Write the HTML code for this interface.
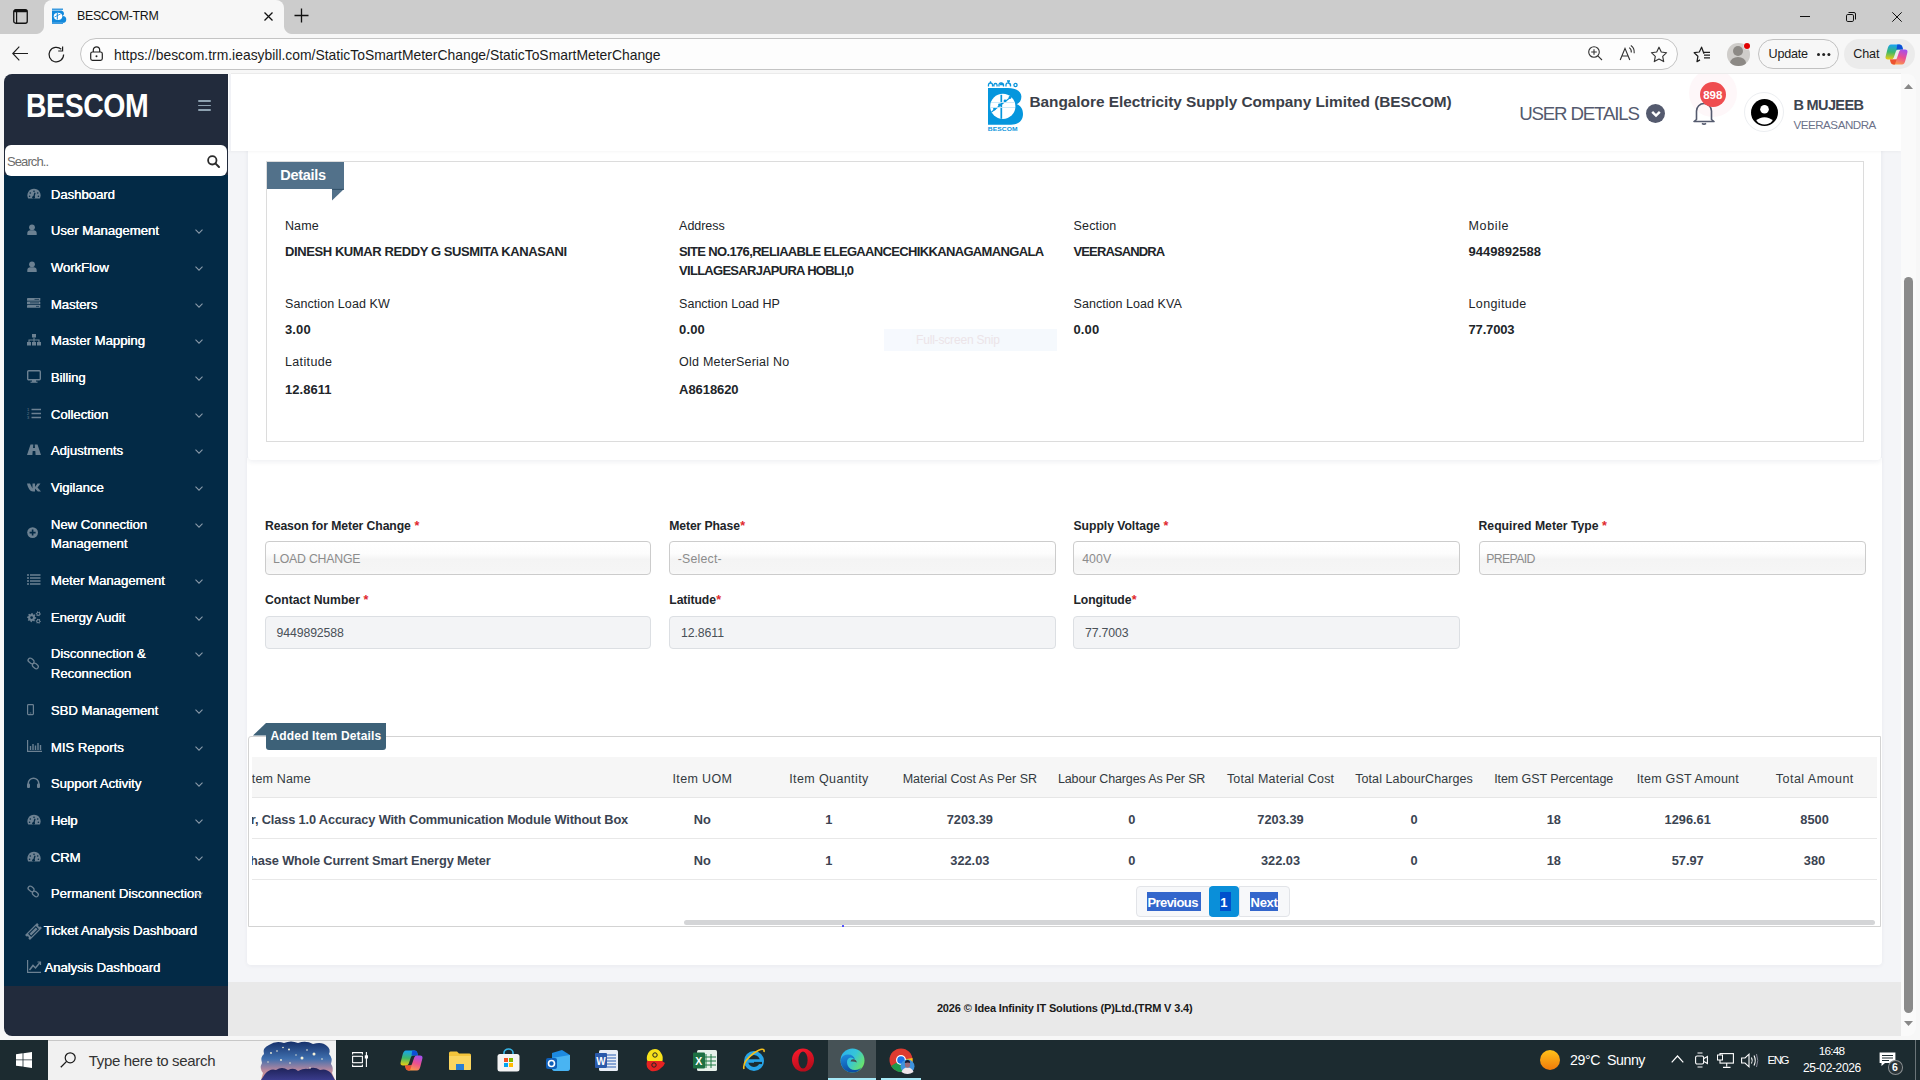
<!DOCTYPE html>
<html><head><meta charset="utf-8">
<style>
*{box-sizing:border-box;margin:0;padding:0}
html,body{width:1920px;height:1080px;overflow:hidden;background:#f7f7f7;font-family:"Liberation Sans",sans-serif;position:relative}
.a{position:absolute;white-space:nowrap}
svg{position:absolute;overflow:visible}
#tabs{left:0;top:0;width:1920px;height:34px;background:#cccccc}
#tab{left:44px;top:0;width:240px;height:34px;background:#f7f7f7;border-radius:8px 8px 0 0}
.flareL{left:36px;top:26px;width:8px;height:8px;background:radial-gradient(circle at 0 0,#cccccc 7.5px,#f7f7f7 8.5px)}
.flareR{left:284px;top:26px;width:8px;height:8px;background:radial-gradient(circle at 100% 0,#cccccc 7.5px,#f7f7f7 8.5px)}
#url{left:80px;top:38px;width:1598px;height:32px;background:#fdfdfd;border:1px solid #c4c4c4;border-radius:16px}
.ctext{font-size:13.9px;color:#1b1b1b;top:47px;line-height:16px}
#vp{left:4px;top:74px;width:1912px;height:962px;background:#f4f5f8;border-radius:8px;overflow:hidden}
</style></head><body>
<!-- browser chrome -->
<div class="a" id="tabs"></div>
<div class="a" id="tab"></div>
<div class="a flareL"></div>
<div class="a flareR"></div>
<svg style="left:13px;top:9px" width="15" height="15" viewBox="0 0 15 15"><rect x="0.75" y="0.75" width="13.5" height="13.5" rx="2" fill="none" stroke="#111" stroke-width="1.3"/><rect x="0.75" y="0.75" width="13.5" height="2.6" rx="1" fill="#111"/><line x1="3.6" y1="3" x2="3.6" y2="14" stroke="#111" stroke-width="1.2"/></svg>
<!-- favicon -->
<svg style="left:52px;top:8px" width="15" height="16" viewBox="0 0 15 16"><rect x="0" y="0.5" width="11" height="1.5" fill="#3c9be0"/><path d="M0 2.5H9.5A4 3.2 0 0 1 10.5 8A4 3.5 0 0 1 10 15H0Z" fill="#1289dc"/><ellipse cx="6" cy="8.3" rx="4.3" ry="3.6" fill="#fff"/><line x1="5.3" y1="5" x2="5.3" y2="11.5" stroke="#1289dc" stroke-width="1"/><line x1="2.5" y1="9" x2="8.5" y2="6" stroke="#1289dc" stroke-width=".8"/><rect x="0" y="14" width="11" height="2" fill="#3c9be0"/></svg>
<div class="a" style="left:77px;top:9px;font-size:12.4px;color:#141414;line-height:14px;letter-spacing:-0.32px">BESCOM-TRM</div>
<svg style="left:264px;top:12px" width="9" height="9" viewBox="0 0 9 9"><path d="M0.5 0.5L8.5 8.5M8.5 0.5L0.5 8.5" stroke="#111" stroke-width="1.25"/></svg>
<svg style="left:294px;top:8px" width="15" height="15" viewBox="0 0 15 15"><path d="M7.5 0.5V14.5M0.5 7.5H14.5" stroke="#111" stroke-width="1.3"/></svg>
<!-- window controls -->
<div class="a" style="left:1800px;top:16px;width:10px;height:1px;background:#111"></div>
<svg style="left:1846px;top:12px" width="10" height="10" viewBox="0 0 10 10"><rect x="0.5" y="2.5" width="7" height="7" rx="1.3" fill="none" stroke="#111" stroke-width="1"/><path d="M2.5 0.5H8A1.5 1.5 0 0 1 9.5 2V7.5" fill="none" stroke="#111" stroke-width="1"/></svg>
<svg style="left:1892px;top:12px" width="10" height="10" viewBox="0 0 10 10"><path d="M0.3 0.3L9.7 9.7M9.7 0.3L0.3 9.7" stroke="#111" stroke-width="1"/></svg>
<!-- toolbar -->
<svg style="left:12px;top:46px" width="17" height="16" viewBox="0 0 17 16"><path d="M16 7.5H1M7.3 0.7L0.8 7.5L7.3 14.3" fill="none" stroke="#1e1e1e" stroke-width="1.15"/></svg>
<svg style="left:47.5px;top:45.5px" width="17" height="17" viewBox="0 0 17 17"><path d="M13.3 3.3A7.3 7.3 0 1 0 15.6 8.5" fill="none" stroke="#1e1e1e" stroke-width="1.2"/><path d="M14.6 0.6V5H10.2" fill="none" stroke="#1e1e1e" stroke-width="1.2"/></svg>
<div class="a" id="url"></div>
<svg style="left:90px;top:46px" width="13" height="15" viewBox="0 0 13 15"><rect x="0.7" y="6" width="11.6" height="8.3" rx="1.8" fill="none" stroke="#222" stroke-width="1.2"/><path d="M3.3 6V4A3.2 3.2 0 0 1 9.7 4V6" fill="none" stroke="#222" stroke-width="1.2"/><circle cx="6.5" cy="10.2" r="1" fill="#222"/></svg>
<div class="a ctext" style="left:114px">https://bescom.trm.ieasybill.com/StaticToSmartMeterChange/StaticToSmartMeterChange</div>
<svg style="left:1588px;top:46px" width="15" height="15" viewBox="0 0 15 15"><circle cx="6" cy="6" r="5.3" fill="none" stroke="#333" stroke-width="1.1"/><path d="M6 3.2V8.8M3.2 6H8.8M9.8 9.8L14 14" stroke="#333" stroke-width="1.1"/></svg>
<svg style="left:1619px;top:45px" width="18" height="16" viewBox="0 0 18 16"><path d="M1.2 15L6 3.4L10.8 15M2.9 11H9.1" fill="none" stroke="#333" stroke-width="1.15"/><path d="M10.2 2.6Q12.6 4.2 12.3 7.5M11.8 0.6Q15.6 2.8 15.2 8.2" fill="none" stroke="#333" stroke-width="1.1"/></svg>
<svg style="left:1650px;top:45.5px" width="18" height="17" viewBox="0 0 18 17"><path d="M9 1.2L11.3 6L16.6 6.7L12.7 10.3L13.7 15.6L9 13L4.3 15.6L5.3 10.3L1.4 6.7L6.7 6Z" fill="none" stroke="#333" stroke-width="1.15" stroke-linejoin="round"/></svg>
<svg style="left:1693px;top:45.5px" width="18" height="17" viewBox="0 0 18 17"><path d="M11 7.8L8.6 1.2L6.3 6L1.2 6.7L4.9 10.3L4 15.6L7 13.9" fill="none" stroke="#1e1e1e" stroke-width="1.25" stroke-linejoin="round"/><path d="M11 6.3H17M11 9.1H17M11 11.9H17" stroke="#1e1e1e" stroke-width="1.3"/></svg>
<div class="a" style="left:1727px;top:43px;width:22.5px;height:22.5px;border-radius:50%;background:#cfcdca;overflow:hidden"><div class="a" style="left:6px;top:3.3px;width:10px;height:10px;border-radius:50%;background:#8c8985"></div><div class="a" style="left:3.3px;top:14.3px;width:16px;height:12px;border-radius:50%;background:#8c8985"></div></div>
<div class="a" style="left:1744px;top:43px;width:6px;height:6px;border-radius:50%;background:#e00000;box-shadow:0 0 0 0.5px #f7f7f7"></div>
<div class="a" style="left:1758px;top:39px;width:81px;height:30px;border:1px solid #c1c1c1;border-radius:15px"></div>
<div class="a" style="left:1768.6px;top:45.8px;font-size:12.6px;color:#1b1b1b;line-height:16px;letter-spacing:-0.25px">Update</div>
<div class="a" style="left:1817px;top:52.8px;width:3px;height:3px;border-radius:50%;background:#222;box-shadow:5.2px 0 0 #222,10.4px 0 0 #222"></div>
<div class="a" style="left:1844px;top:39px;width:71px;height:30px;background:#ebebeb;border-radius:15px"></div>
<div class="a" style="left:1853.2px;top:45.6px;font-size:12.6px;color:#1b1b1b;line-height:16px;letter-spacing:-0.1px">Chat</div>
<svg style="left:1884.5px;top:43.5px" width="23" height="21" viewBox="0 0 23 21"><defs><linearGradient id="cg1" x1="0.3" y1="0" x2="0.2" y2="1"><stop offset="0" stop-color="#17a2f2"/><stop offset=".5" stop-color="#3db86a"/><stop offset="1" stop-color="#f0cc10"/></linearGradient><linearGradient id="cg2" x1="0.8" y1="0" x2="0.4" y2="1"><stop offset="0" stop-color="#a24ff0"/><stop offset=".5" stop-color="#ec4f90"/><stop offset="1" stop-color="#fb9a48"/></linearGradient></defs><path d="M6 0.5H14.5Q16.5 0.5 17.2 2.5L18 5.5H13Q11.5 5.5 11 7L8.8 13.5Q8 15.5 6 15.5H3Q0 15.5 0.6 12.5L2.5 5Q3.5 0.5 6 0.5Z" fill="url(#cg1)"/><path d="M12.3 0.5H14.5Q16.5 0.5 17.2 2.5L18 5.5H11.5Z" fill="#0d4fd8"/><path d="M17 20.5H8.5Q6.5 20.5 5.8 18.5L5 15.5H10Q11.5 15.5 12 14L14.2 7.5Q15 5.5 17 5.5H20Q23 5.5 22.4 8.5L20.5 16Q19.5 20.5 17 20.5Z" fill="url(#cg2)"/><path d="M5 15.5H11.5L10 20.5H8.5Q6.5 20.5 5.8 18.5Z" fill="#ec5230"/></svg>

<div class="a" id="vp"></div>
<div class="a" style="left:4px;top:74px;width:224px;height:962px;background:#222b3c;border-radius:8px 0 0 8px;"></div>
<div class="a" style="left:4px;top:175px;width:224px;height:811px;background:#032a46;"></div>
<div class="a " style="left:25.60px;top:85.13px;font-size:32.8px;line-height:41px;color:#ffffff;font-weight:bold;letter-spacing:-0.500px;transform:scaleX(0.868);transform-origin:0 0;">BESCOM</div>
<div class="a" style="left:198px;top:100px;width:12.5px;height:1.8px;background:#8ea2b1;border-radius:1px;"></div>
<div class="a" style="left:198px;top:104.5px;width:12.5px;height:1.8px;background:#8ea2b1;border-radius:1px;"></div>
<div class="a" style="left:198px;top:109px;width:12.5px;height:1.8px;background:#8ea2b1;border-radius:1px;"></div>
<div class="a" style="left:5px;top:145px;width:221.5px;height:30.5px;background:#ffffff;border-radius:6px;"></div>
<div class="a " style="left:7.00px;top:153.50px;font-size:13px;line-height:16px;color:#6c6c6c;letter-spacing:-0.916px;">Search..</div>
<svg style="left:207px;top:154.5px" width="13" height="13" viewBox="0 0 13 13"><circle cx="5.3" cy="5.3" r="4.2" fill="none" stroke="#2b2b2b" stroke-width="1.8"/><path d="M8.4 8.4L12 12" stroke="#2b2b2b" stroke-width="2" stroke-linecap="round"/></svg>
<div class="a " style="left:50.70px;top:187.03px;font-size:13.2px;line-height:16px;color:#ffffff;letter-spacing:-0.044px;text-shadow:0.35px 0 0 #fff;">Dashboard</div>
<svg style="left:27px;top:187.5px" width="15" height="13" viewBox="0 0 15 13"><path d="M1.2 10.5A6.6 6.6 0 1 1 12.8 10.5Z" fill="#6c8192"/><circle cx="7" cy="3.3" r="0.8" fill="#032a46"/><circle cx="3.3" cy="5" r="0.8" fill="#032a46"/><circle cx="10.7" cy="5" r="0.8" fill="#032a46"/><circle cx="2.6" cy="8.3" r="0.8" fill="#032a46"/><circle cx="11.4" cy="8.3" r="0.8" fill="#032a46"/><path d="M6.5 10L8 4.8" stroke="#032a46" stroke-width="1.3"/><circle cx="6.6" cy="9.3" r="1.4" fill="#032a46"/></svg>
<div class="a " style="left:50.70px;top:222.73px;font-size:13.2px;line-height:16px;color:#ffffff;letter-spacing:-0.025px;text-shadow:0.35px 0 0 #fff;">User Management</div>
<svg style="left:27px;top:223.7px" width="15" height="13" viewBox="0 0 15 13"><circle cx="5" cy="3.3" r="2.9" fill="#6c8192"/><path d="M0.3 11V9A3 3 0 0 1 3.3 6.3H6.7A3 3 0 0 1 9.7 9V11Z" fill="#6c8192"/></svg>
<svg style="left:195px;top:228.7px" width="8" height="5" viewBox="0 0 8 5"><path d="M0.5 0.6L4 4.1L7.5 0.6" fill="none" stroke="#8a9aa9" stroke-width="1.1"/></svg>
<div class="a " style="left:50.70px;top:259.73px;font-size:13.2px;line-height:16px;color:#ffffff;letter-spacing:-0.050px;text-shadow:0.35px 0 0 #fff;">WorkFlow</div>
<svg style="left:27px;top:260.7px" width="15" height="13" viewBox="0 0 15 13"><circle cx="5" cy="3.3" r="2.9" fill="#6c8192"/><path d="M0.3 11V9A3 3 0 0 1 3.3 6.3H6.7A3 3 0 0 1 9.7 9V11Z" fill="#6c8192"/></svg>
<svg style="left:195px;top:265.7px" width="8" height="5" viewBox="0 0 8 5"><path d="M0.5 0.6L4 4.1L7.5 0.6" fill="none" stroke="#8a9aa9" stroke-width="1.1"/></svg>
<div class="a " style="left:50.70px;top:297.23px;font-size:13.2px;line-height:16px;color:#ffffff;letter-spacing:-0.058px;text-shadow:0.35px 0 0 #fff;">Masters</div>
<svg style="left:27px;top:298.1px" width="15" height="13" viewBox="0 0 15 13"><rect x="0" y="0" width="13.3" height="2.8" rx="0.4" fill="#6c8192"/><rect x="0" y="3.5" width="13.3" height="2.8" rx="0.4" fill="#6c8192"/><rect x="0" y="7" width="13.3" height="2.8" rx="0.4" fill="#6c8192"/><path d="M7.5 1.4H12M3 4.9H12M9 8.4H12" stroke="#032a46" stroke-width="0.7"/></svg>
<svg style="left:195px;top:303.2px" width="8" height="5" viewBox="0 0 8 5"><path d="M0.5 0.6L4 4.1L7.5 0.6" fill="none" stroke="#8a9aa9" stroke-width="1.1"/></svg>
<div class="a " style="left:50.70px;top:333.03px;font-size:13.2px;line-height:16px;color:#ffffff;letter-spacing:-0.027px;text-shadow:0.35px 0 0 #fff;">Master Mapping</div>
<svg style="left:27px;top:333.5px" width="15" height="13" viewBox="0 0 15 13"><rect x="5" y="0" width="4" height="3.5" fill="#6c8192"/><path d="M7 3.5V6M2 8V6H12V8M7 6V8" stroke="#6c8192" stroke-width="1.1" fill="none"/><rect x="0" y="8" width="4" height="3.5" fill="#6c8192"/><rect x="5" y="8" width="4" height="3.5" fill="#6c8192"/><rect x="10" y="8" width="4" height="3.5" fill="#6c8192"/></svg>
<svg style="left:195px;top:339.0px" width="8" height="5" viewBox="0 0 8 5"><path d="M0.5 0.6L4 4.1L7.5 0.6" fill="none" stroke="#8a9aa9" stroke-width="1.1"/></svg>
<div class="a " style="left:50.70px;top:370.03px;font-size:13.2px;line-height:16px;color:#ffffff;letter-spacing:-0.058px;text-shadow:0.35px 0 0 #fff;">Billing</div>
<svg style="left:27px;top:370.2px" width="15" height="13" viewBox="0 0 15 13"><rect x="0.7" y="0.7" width="12.6" height="9" rx="1" fill="none" stroke="#6c8192" stroke-width="1.4"/><rect x="5" y="10" width="4" height="2" fill="#6c8192"/><rect x="3.5" y="11.6" width="7" height="1.2" fill="#6c8192"/></svg>
<svg style="left:195px;top:376.0px" width="8" height="5" viewBox="0 0 8 5"><path d="M0.5 0.6L4 4.1L7.5 0.6" fill="none" stroke="#8a9aa9" stroke-width="1.1"/></svg>
<div class="a " style="left:50.70px;top:406.73px;font-size:13.2px;line-height:16px;color:#ffffff;letter-spacing:-0.039px;text-shadow:0.35px 0 0 #fff;">Collection</div>
<svg style="left:27px;top:407px" width="15" height="13" viewBox="0 0 15 13"><path d="M4.5 2.5H14M4.5 6.5H14M4.5 10.5H14" stroke="#6c8192" stroke-width="1.6"/><text x="0" y="4" font-size="4" fill="#6c8192" font-family="Liberation Sans">1</text><text x="0" y="8" font-size="4" fill="#6c8192" font-family="Liberation Sans">2</text><text x="0" y="12" font-size="4" fill="#6c8192" font-family="Liberation Sans">3</text></svg>
<svg style="left:195px;top:412.7px" width="8" height="5" viewBox="0 0 8 5"><path d="M0.5 0.6L4 4.1L7.5 0.6" fill="none" stroke="#8a9aa9" stroke-width="1.1"/></svg>
<div class="a " style="left:50.70px;top:443.03px;font-size:13.2px;line-height:16px;color:#ffffff;letter-spacing:-0.035px;text-shadow:0.35px 0 0 #fff;">Adjustments</div>
<svg style="left:27px;top:444px" width="15" height="13" viewBox="0 0 15 13"><path d="M0 11L3.5 0.5H6.3L6 4H8L7.7 0.5H10.5L14 11H8.6L8.3 7H5.7L5.4 11Z" fill="#6c8192"/></svg>
<svg style="left:195px;top:449.0px" width="8" height="5" viewBox="0 0 8 5"><path d="M0.5 0.6L4 4.1L7.5 0.6" fill="none" stroke="#8a9aa9" stroke-width="1.1"/></svg>
<div class="a " style="left:50.70px;top:479.93px;font-size:13.2px;line-height:16px;color:#ffffff;letter-spacing:-0.044px;text-shadow:0.35px 0 0 #fff;">Vigilance</div>
<svg style="left:27px;top:481.5px" width="15" height="13" viewBox="0 0 15 13"><path d="M0 1.5H3L5.5 6.5V1.5H8V5L10.5 1.5H13.5L10.5 5.5L14 9.5H10.8L8 6.5V9.5H6C3 9.5 1 6 0 1.5Z" fill="#6c8192"/></svg>
<svg style="left:195px;top:485.9px" width="8" height="5" viewBox="0 0 8 5"><path d="M0.5 0.6L4 4.1L7.5 0.6" fill="none" stroke="#8a9aa9" stroke-width="1.1"/></svg>
<div class="a " style="left:50.70px;top:517.03px;font-size:13.2px;line-height:16px;color:#ffffff;letter-spacing:-0.027px;text-shadow:0.35px 0 0 #fff;">New Connection</div>
<div class="a " style="left:50.70px;top:535.83px;font-size:13.2px;line-height:16px;color:#ffffff;letter-spacing:-0.039px;text-shadow:0.35px 0 0 #fff;">Management</div>
<svg style="left:27px;top:527.4px" width="15" height="13" viewBox="0 0 15 13"><circle cx="5.6" cy="5.6" r="5.4" fill="#6c8192"/><path d="M5.6 2.6V8.6M2.6 5.6H8.6" stroke="#032a46" stroke-width="1.6"/></svg>
<svg style="left:195px;top:523.0px" width="8" height="5" viewBox="0 0 8 5"><path d="M0.5 0.6L4 4.1L7.5 0.6" fill="none" stroke="#8a9aa9" stroke-width="1.1"/></svg>
<div class="a " style="left:50.70px;top:573.03px;font-size:13.2px;line-height:16px;color:#ffffff;letter-spacing:-0.023px;text-shadow:0.35px 0 0 #fff;">Meter Management</div>
<svg style="left:27px;top:574px" width="15" height="13" viewBox="0 0 15 13"><path d="M0 1H2M0 4H2M0 7H2M0 10H2M3 1H13.5M3 4H13.5M3 7H13.5M3 10H13.5" stroke="#6c8192" stroke-width="1.5"/></svg>
<svg style="left:195px;top:579.0px" width="8" height="5" viewBox="0 0 8 5"><path d="M0.5 0.6L4 4.1L7.5 0.6" fill="none" stroke="#8a9aa9" stroke-width="1.1"/></svg>
<div class="a " style="left:50.70px;top:609.73px;font-size:13.2px;line-height:16px;color:#ffffff;letter-spacing:-0.032px;text-shadow:0.35px 0 0 #fff;">Energy Audit</div>
<svg style="left:27px;top:610.5px" width="15" height="13" viewBox="0 0 15 13"><path fill-rule="evenodd" d="M9.20 6.60L9.11 7.50L7.83 7.94L7.51 8.54L7.85 9.85L7.16 10.42L5.94 9.83L5.28 10.03L4.60 11.20L3.70 11.11L3.26 9.83L2.66 9.51L1.35 9.85L0.78 9.16L1.37 7.94L1.17 7.28L0.00 6.60L0.09 5.70L1.37 5.26L1.69 4.66L1.35 3.35L2.04 2.78L3.26 3.37L3.92 3.17L4.60 2.00L5.50 2.09L5.94 3.37L6.54 3.69L7.85 3.35L8.42 4.04L7.83 5.26L8.03 5.92ZM6.00 6.60A1.4 1.4 0 1 0 3.20 6.60A1.4 1.4 0 1 0 6.00 6.60ZM13.90 2.80L13.81 3.47L12.95 3.75L12.64 4.14L12.60 5.05L11.97 5.31L11.30 4.70L10.81 4.64L10.00 5.05L9.46 4.64L9.65 3.75L9.46 3.29L8.70 2.80L8.79 2.13L9.65 1.85L9.96 1.46L10.00 0.55L10.63 0.29L11.30 0.90L11.79 0.96L12.60 0.55L13.14 0.96L12.95 1.85L13.14 2.31ZM12.30 2.80A1.0 1.0 0 1 0 10.30 2.80A1.0 1.0 0 1 0 12.30 2.80ZM13.90 10.20L13.81 10.87L12.95 11.15L12.64 11.54L12.60 12.45L11.97 12.71L11.30 12.10L10.81 12.04L10.00 12.45L9.46 12.04L9.65 11.15L9.46 10.69L8.70 10.20L8.79 9.53L9.65 9.25L9.96 8.86L10.00 7.95L10.63 7.69L11.30 8.30L11.79 8.36L12.60 7.95L13.14 8.36L12.95 9.25L13.14 9.71ZM12.30 10.20A1.0 1.0 0 1 0 10.30 10.20A1.0 1.0 0 1 0 12.30 10.20Z" fill="#6c8192"/></svg>
<svg style="left:195px;top:615.7px" width="8" height="5" viewBox="0 0 8 5"><path d="M0.5 0.6L4 4.1L7.5 0.6" fill="none" stroke="#8a9aa9" stroke-width="1.1"/></svg>
<div class="a " style="left:50.70px;top:645.83px;font-size:13.2px;line-height:16px;color:#ffffff;letter-spacing:-0.025px;text-shadow:0.35px 0 0 #fff;">Disconnection &amp;</div>
<div class="a " style="left:50.70px;top:665.73px;font-size:13.2px;line-height:16px;color:#ffffff;letter-spacing:-0.032px;text-shadow:0.35px 0 0 #fff;">Reconnection</div>
<svg style="left:27px;top:658px" width="15" height="13" viewBox="0 0 15 13"><rect x="0.8" y="0.8" width="6.5" height="4.2" rx="2.1" transform="rotate(40 4 3)" fill="none" stroke="#6c8192" stroke-width="1.3"/><rect x="5" y="5.8" width="6.5" height="4.2" rx="2.1" transform="rotate(40 8.2 8)" fill="none" stroke="#6c8192" stroke-width="1.3"/></svg>
<svg style="left:195px;top:651.8px" width="8" height="5" viewBox="0 0 8 5"><path d="M0.5 0.6L4 4.1L7.5 0.6" fill="none" stroke="#8a9aa9" stroke-width="1.1"/></svg>
<div class="a " style="left:50.70px;top:702.93px;font-size:13.2px;line-height:16px;color:#ffffff;letter-spacing:-0.027px;text-shadow:0.35px 0 0 #fff;">SBD Management</div>
<svg style="left:27px;top:704px" width="15" height="13" viewBox="0 0 15 13"><rect x="0.6" y="0.6" width="5.8" height="10" rx="0.8" fill="none" stroke="#6c8192" stroke-width="1.2"/><path d="M2.7 9H4.3" stroke="#6c8192" stroke-width="0.8"/></svg>
<svg style="left:195px;top:708.9px" width="8" height="5" viewBox="0 0 8 5"><path d="M0.5 0.6L4 4.1L7.5 0.6" fill="none" stroke="#8a9aa9" stroke-width="1.1"/></svg>
<div class="a " style="left:50.70px;top:739.93px;font-size:13.2px;line-height:16px;color:#ffffff;letter-spacing:-0.035px;text-shadow:0.35px 0 0 #fff;">MIS Reports</div>
<svg style="left:27px;top:740px" width="15" height="13" viewBox="0 0 15 13"><path d="M0.6 0V11.4H15" stroke="#6c8192" stroke-width="1.2" fill="none"/><path d="M3.5 10V6M6 10V4M8.5 10V5.5M11 10V3M13.5 10V5" stroke="#6c8192" stroke-width="1.4"/></svg>
<svg style="left:195px;top:745.9px" width="8" height="5" viewBox="0 0 8 5"><path d="M0.5 0.6L4 4.1L7.5 0.6" fill="none" stroke="#8a9aa9" stroke-width="1.1"/></svg>
<div class="a " style="left:50.70px;top:775.93px;font-size:13.2px;line-height:16px;color:#ffffff;letter-spacing:-0.023px;text-shadow:0.35px 0 0 #fff;">Support Activity</div>
<svg style="left:27px;top:776.5px" width="15" height="13" viewBox="0 0 15 13"><path d="M1.2 8V6.5A5.3 5.3 0 0 1 11.8 6.5V8" fill="none" stroke="#6c8192" stroke-width="1.5"/><rect x="0" y="6.5" width="3" height="4.5" rx="1" fill="#6c8192"/><rect x="10" y="6.5" width="3" height="4.5" rx="1" fill="#6c8192"/></svg>
<svg style="left:195px;top:781.9px" width="8" height="5" viewBox="0 0 8 5"><path d="M0.5 0.6L4 4.1L7.5 0.6" fill="none" stroke="#8a9aa9" stroke-width="1.1"/></svg>
<div class="a " style="left:50.70px;top:812.93px;font-size:13.2px;line-height:16px;color:#ffffff;letter-spacing:-0.117px;text-shadow:0.35px 0 0 #fff;">Help</div>
<svg style="left:27px;top:814px" width="15" height="13" viewBox="0 0 15 13"><path d="M1.2 10.5A6.6 6.6 0 1 1 12.8 10.5Z" fill="#6c8192"/><circle cx="7" cy="3.3" r="0.8" fill="#032a46"/><circle cx="3.3" cy="5" r="0.8" fill="#032a46"/><circle cx="10.7" cy="5" r="0.8" fill="#032a46"/><circle cx="2.6" cy="8.3" r="0.8" fill="#032a46"/><circle cx="11.4" cy="8.3" r="0.8" fill="#032a46"/><path d="M6.5 10L8 4.8" stroke="#032a46" stroke-width="1.3"/><circle cx="6.6" cy="9.3" r="1.4" fill="#032a46"/></svg>
<svg style="left:195px;top:818.9px" width="8" height="5" viewBox="0 0 8 5"><path d="M0.5 0.6L4 4.1L7.5 0.6" fill="none" stroke="#8a9aa9" stroke-width="1.1"/></svg>
<div class="a " style="left:50.70px;top:850.23px;font-size:13.2px;line-height:16px;color:#ffffff;letter-spacing:-0.175px;text-shadow:0.35px 0 0 #fff;">CRM</div>
<svg style="left:27px;top:851px" width="15" height="13" viewBox="0 0 15 13"><path d="M1.2 10.5A6.6 6.6 0 1 1 12.8 10.5Z" fill="#6c8192"/><circle cx="7" cy="3.3" r="0.8" fill="#032a46"/><circle cx="3.3" cy="5" r="0.8" fill="#032a46"/><circle cx="10.7" cy="5" r="0.8" fill="#032a46"/><circle cx="2.6" cy="8.3" r="0.8" fill="#032a46"/><circle cx="11.4" cy="8.3" r="0.8" fill="#032a46"/><path d="M6.5 10L8 4.8" stroke="#032a46" stroke-width="1.3"/><circle cx="6.6" cy="9.3" r="1.4" fill="#032a46"/></svg>
<svg style="left:195px;top:856.2px" width="8" height="5" viewBox="0 0 8 5"><path d="M0.5 0.6L4 4.1L7.5 0.6" fill="none" stroke="#8a9aa9" stroke-width="1.1"/></svg>
<div class="a " style="left:50.70px;top:886.33px;font-size:13.2px;line-height:16px;color:#ffffff;letter-spacing:-0.016px;text-shadow:0.35px 0 0 #fff;">Permanent Disconnection</div>
<svg style="left:27px;top:886px" width="15" height="13" viewBox="0 0 15 13"><rect x="0.8" y="0.8" width="6.5" height="4.2" rx="2.1" transform="rotate(40 4 3)" fill="none" stroke="#6c8192" stroke-width="1.3"/><rect x="5" y="5.8" width="6.5" height="4.2" rx="2.1" transform="rotate(40 8.2 8)" fill="none" stroke="#6c8192" stroke-width="1.3"/></svg>
<svg style="left:195px;top:892.3px" width="8" height="5" viewBox="0 0 8 5"><path d="M0.5 0.6L4 4.1L7.5 0.6" fill="none" stroke="#8a9aa9" stroke-width="1.1"/></svg>
<svg style="left:25.5px;top:924px" width="15" height="15" viewBox="0 0 15 15"><g transform="rotate(-45 7.5 7.5)"><path d="M-1 4H16V6.2A1.3 1.3 0 0 0 16 8.8V11H-1V8.8A1.3 1.3 0 0 0 -1 6.2Z" fill="#6c8192"/><rect x="2.5" y="5.8" width="10" height="3.4" fill="none" stroke="#032a46" stroke-width="1"/></g></svg>
<div class="a " style="left:43.60px;top:922.73px;font-size:13.2px;line-height:16px;color:#ffffff;letter-spacing:-0.061px;text-shadow:0.35px 0 0 #fff;">Ticket Analysis Dashboard</div>
<svg style="left:27px;top:960px" width="15" height="13" viewBox="0 0 15 13"><path d="M0.6 0V12.4H14" stroke="#6c8192" stroke-width="1.2" fill="none"/><path d="M2.5 10L6 5.5L8.5 8L13 2.5" stroke="#6c8192" stroke-width="1.5" fill="none"/><path d="M10.5 2H13.5V5" stroke="#6c8192" stroke-width="1.2" fill="none"/></svg>
<div class="a " style="left:44.40px;top:959.63px;font-size:13.2px;line-height:16px;color:#ffffff;letter-spacing:-0.082px;text-shadow:0.35px 0 0 #fff;">Analysis Dashboard</div>

<div class="a" style="left:247px;top:458px;width:1635px;height:507px;background:#ffffff;border-radius:0 0 4px 4px;box-shadow:0 1px 4px rgba(30,40,80,0.05);"></div>
<div class="a" style="left:248px;top:140px;width:1633px;height:320px;background:#ffffff;border-radius:4px;box-shadow:0 2px 5px rgba(30,40,80,0.07);"></div>
<div class="a" style="left:266px;top:161px;width:1598px;height:281px;border:1px solid #dcdcdc;"></div>
<div class="a" style="left:267px;top:162px;width:77px;height:26.6px;background:#52718a;"></div>
<svg style="left:332px;top:188.5px" width="12" height="11.5" viewBox="0 0 12 11.5"><path d="M0 0H12L0 11.5Z" fill="#52718a"/><path d="M0 0.4H12" stroke="#2e4d63" stroke-width="0.9"/></svg>
<div class="a " style="left:280.30px;top:165.88px;font-size:14.5px;line-height:18px;color:#ffffff;font-weight:bold;letter-spacing:-0.308px;">Details</div>
<div class="a " style="left:285.00px;top:217.77px;font-size:12.5px;line-height:16px;color:#212529;letter-spacing:0.085px;">Name</div>
<div class="a " style="left:285.00px;top:243.80px;font-size:13px;line-height:16px;color:#212529;font-weight:bold;letter-spacing:-0.406px;">DINESH KUMAR REDDY G SUSMITA KANASANI</div>
<div class="a " style="left:679.10px;top:217.77px;font-size:12.5px;line-height:16px;color:#212529;letter-spacing:-0.043px;">Address</div>
<div class="a " style="left:679.10px;top:243.80px;font-size:13px;line-height:16px;color:#212529;font-weight:bold;letter-spacing:-0.656px;">SITE NO.176,RELIAABLE ELEGAANCECHIKKANAGAMANGALA</div>
<div class="a " style="left:1073.50px;top:217.77px;font-size:12.5px;line-height:16px;color:#212529;letter-spacing:0.168px;">Section</div>
<div class="a " style="left:1073.50px;top:243.80px;font-size:13px;line-height:16px;color:#212529;font-weight:bold;letter-spacing:-0.870px;">VEERASANDRA</div>
<div class="a " style="left:1468.50px;top:217.77px;font-size:12.5px;line-height:16px;color:#212529;letter-spacing:0.635px;">Mobile</div>
<div class="a " style="left:1468.50px;top:243.80px;font-size:13px;line-height:16px;color:#212529;font-weight:bold;letter-spacing:0.033px;">9449892588</div>
<div class="a " style="left:285.00px;top:295.57px;font-size:12.5px;line-height:16px;color:#212529;letter-spacing:0.078px;">Sanction Load KW</div>
<div class="a " style="left:285.00px;top:321.80px;font-size:13px;line-height:16px;color:#212529;font-weight:bold;letter-spacing:0.133px;">3.00</div>
<div class="a " style="left:679.10px;top:295.57px;font-size:12.5px;line-height:16px;color:#212529;">Sanction Load HP</div>
<div class="a " style="left:679.10px;top:321.80px;font-size:13px;line-height:16px;color:#212529;font-weight:bold;letter-spacing:0.133px;">0.00</div>
<div class="a " style="left:1073.50px;top:295.57px;font-size:12.5px;line-height:16px;color:#212529;letter-spacing:0.051px;">Sanction Load KVA</div>
<div class="a " style="left:1073.50px;top:321.80px;font-size:13px;line-height:16px;color:#212529;font-weight:bold;letter-spacing:0.133px;">0.00</div>
<div class="a " style="left:1468.50px;top:295.57px;font-size:12.5px;line-height:16px;color:#212529;letter-spacing:0.361px;">Longitude</div>
<div class="a " style="left:1468.50px;top:321.80px;font-size:13px;line-height:16px;color:#212529;font-weight:bold;letter-spacing:-0.165px;">77.7003</div>
<div class="a " style="left:285.00px;top:354.47px;font-size:12.5px;line-height:16px;color:#212529;letter-spacing:0.360px;">Latitude</div>
<div class="a " style="left:285.00px;top:381.60px;font-size:13px;line-height:16px;color:#212529;font-weight:bold;letter-spacing:0.021px;">12.8611</div>
<div class="a " style="left:679.10px;top:354.47px;font-size:12.5px;line-height:16px;color:#212529;letter-spacing:0.218px;">Old MeterSerial No</div>
<div class="a " style="left:679.10px;top:381.60px;font-size:13px;line-height:16px;color:#212529;font-weight:bold;letter-spacing:-0.071px;">A8618620</div>
<div class="a " style="left:679.10px;top:262.50px;font-size:13px;line-height:16px;color:#212529;font-weight:bold;letter-spacing:-0.724px;">VILLAGESARJAPURA HOBLI,0</div>
<div class="a" style="left:884px;top:329.2px;width:173px;height:21.5px;background:#f5f9fd;"></div>
<div class="a" style="left:884px;top:329.2px;width:28px;height:21.5px;background:#f6f9fe;"></div>
<div class="a " style="left:916.00px;top:332.64px;font-size:12px;line-height:15px;color:#ece4e8;letter-spacing:-0.180px;">Full-screen Snip</div>
<div class="a " style="left:265.00px;top:518.67px;font-size:12.2px;line-height:15px;color:#212529;font-weight:bold;letter-spacing:-0.081px;">Reason for Meter Change</div>
<div class="a " style="left:414.50px;top:518.07px;font-size:12.5px;line-height:16px;color:#e0282e;font-weight:bold;">*</div>
<div class="a " style="left:669.30px;top:518.67px;font-size:12.2px;line-height:15px;color:#212529;font-weight:bold;letter-spacing:-0.118px;">Meter Phase</div>
<div class="a " style="left:740.30px;top:518.07px;font-size:12.5px;line-height:16px;color:#e0282e;font-weight:bold;">*</div>
<div class="a " style="left:1073.50px;top:518.67px;font-size:12.2px;line-height:15px;color:#212529;font-weight:bold;letter-spacing:-0.040px;">Supply Voltage</div>
<div class="a " style="left:1163.50px;top:518.07px;font-size:12.5px;line-height:16px;color:#e0282e;font-weight:bold;">*</div>
<div class="a " style="left:1478.50px;top:518.67px;font-size:12.2px;line-height:15px;color:#212529;font-weight:bold;letter-spacing:0.024px;">Required Meter Type</div>
<div class="a " style="left:1602.00px;top:518.07px;font-size:12.5px;line-height:16px;color:#e0282e;font-weight:bold;">*</div>
<div class="a " style="left:265.00px;top:592.57px;font-size:12.2px;line-height:15px;color:#212529;font-weight:bold;letter-spacing:0.008px;">Contact Number</div>
<div class="a " style="left:363.50px;top:591.97px;font-size:12.5px;line-height:16px;color:#e0282e;font-weight:bold;">*</div>
<div class="a " style="left:669.30px;top:592.57px;font-size:12.2px;line-height:15px;color:#212529;font-weight:bold;letter-spacing:-0.106px;">Latitude</div>
<div class="a " style="left:716.30px;top:591.97px;font-size:12.5px;line-height:16px;color:#e0282e;font-weight:bold;">*</div>
<div class="a " style="left:1073.50px;top:592.57px;font-size:12.2px;line-height:15px;color:#212529;font-weight:bold;letter-spacing:-0.119px;">Longitude</div>
<div class="a " style="left:1131.80px;top:591.97px;font-size:12.5px;line-height:16px;color:#e0282e;font-weight:bold;">*</div>
<div class="a" style="left:265px;top:541.3px;width:386px;height:33.5px;background:linear-gradient(#ffffff 0%,#fdfdfd 35%,#f4f4f4 55%,#f5f5f5 85%,#f9f9f9 100%);border:1px solid #cccccc;border-radius:4px;"></div>
<div class="a" style="left:669px;top:541.3px;width:387px;height:33.5px;background:linear-gradient(#ffffff 0%,#fdfdfd 35%,#f4f4f4 55%,#f5f5f5 85%,#f9f9f9 100%);border:1px solid #cccccc;border-radius:4px;"></div>
<div class="a" style="left:1073px;top:541.3px;width:386.7px;height:33.5px;background:linear-gradient(#ffffff 0%,#fdfdfd 35%,#f4f4f4 55%,#f5f5f5 85%,#f9f9f9 100%);border:1px solid #cccccc;border-radius:4px;"></div>
<div class="a" style="left:1478.5px;top:541.3px;width:387.2px;height:33.5px;background:linear-gradient(#ffffff 0%,#fdfdfd 35%,#f4f4f4 55%,#f5f5f5 85%,#f9f9f9 100%);border:1px solid #cccccc;border-radius:4px;"></div>
<div class="a" style="left:265px;top:615.5px;width:386px;height:33.5px;background:#f3f4f6;border:1px solid #dcdfe3;border-radius:4px;"></div>
<div class="a" style="left:669px;top:615.5px;width:387px;height:33.5px;background:#f3f4f6;border:1px solid #dcdfe3;border-radius:4px;"></div>
<div class="a" style="left:1073px;top:615.5px;width:386.7px;height:33.5px;background:#f3f4f6;border:1px solid #dcdfe3;border-radius:4px;"></div>
<div class="a " style="left:273.00px;top:551.54px;font-size:12.3px;line-height:15px;color:#8c8c8c;letter-spacing:-0.204px;">LOAD CHANGE</div>
<div class="a " style="left:677.70px;top:551.54px;font-size:12.3px;line-height:15px;color:#8c8c8c;letter-spacing:0.232px;">-Select-</div>
<div class="a " style="left:1082.20px;top:551.54px;font-size:12.3px;line-height:15px;color:#8c8c8c;letter-spacing:0.091px;">400V</div>
<div class="a " style="left:1486.30px;top:551.54px;font-size:12.3px;line-height:15px;color:#8c8c8c;letter-spacing:-0.681px;">PREPAID</div>
<div class="a " style="left:276.50px;top:625.74px;font-size:12.3px;line-height:15px;color:#495057;letter-spacing:-0.112px;">9449892588</div>
<div class="a " style="left:681.00px;top:625.74px;font-size:12.3px;line-height:15px;color:#495057;letter-spacing:-0.092px;">12.8611</div>
<div class="a " style="left:1085.00px;top:625.74px;font-size:12.3px;line-height:15px;color:#495057;letter-spacing:-0.160px;">77.7003</div>
<div class="a" style="left:247.5px;top:735.5px;width:1633.5px;height:191.5px;border:1px solid #d3d3d3;border-radius:3px 0 0 0;"></div>
<div class="a" style="left:252px;top:757px;width:1625px;height:40.5px;background:#f6f6f6;border-bottom:1px solid #e6e6e6;"></div>
<div class="a" style="left:252px;top:838px;width:1625px;height:1px;background:#e8e8e8;"></div>
<div class="a" style="left:252px;top:879px;width:1625px;height:1px;background:#e8e8e8;"></div>
<svg style="left:252.5px;top:723.3px" width="13" height="12.5" viewBox="0 0 13 12.5"><path d="M0 12.5L13 0V12.5Z" fill="#3d6178"/></svg>
<div class="a" style="left:265.8px;top:723.1px;width:120.2px;height:26.6px;background:#3d6178;border-radius:0 0 3px 3px;"></div>
<div class="a " style="left:270.50px;top:729.34px;font-size:12px;line-height:15px;color:#ffffff;font-weight:bold;letter-spacing:0.160px;">Added Item Details</div>
<div class="a " style="left:672.50px;top:770.87px;font-size:12.5px;line-height:16px;color:#333a40;letter-spacing:0.351px;">Item UOM</div>
<div class="a " style="left:789.20px;top:770.87px;font-size:12.5px;line-height:16px;color:#333a40;letter-spacing:0.397px;">Item Quantity</div>
<div class="a " style="left:902.70px;top:770.87px;font-size:12.5px;line-height:16px;color:#333a40;letter-spacing:-0.021px;">Material Cost As Per SR</div>
<div class="a " style="left:1058.00px;top:770.87px;font-size:12.5px;line-height:16px;color:#333a40;letter-spacing:-0.147px;">Labour Charges As Per SR</div>
<div class="a " style="left:1226.90px;top:770.87px;font-size:12.5px;line-height:16px;color:#333a40;letter-spacing:0.205px;">Total Material Cost</div>
<div class="a " style="left:1355.20px;top:770.87px;font-size:12.5px;line-height:16px;color:#333a40;letter-spacing:0.086px;">Total LabourCharges</div>
<div class="a " style="left:1494.20px;top:770.87px;font-size:12.5px;line-height:16px;color:#333a40;letter-spacing:-0.087px;">Item GST Percentage</div>
<div class="a " style="left:1636.70px;top:770.87px;font-size:12.5px;line-height:16px;color:#333a40;letter-spacing:0.209px;">Item GST Amount</div>
<div class="a " style="left:1775.80px;top:770.87px;font-size:12.5px;line-height:16px;color:#333a40;letter-spacing:0.476px;">Total Amount</div>
<div class="a" style="left:252px;top:760px;width:420px;height:118px;overflow:hidden">
<div class="a " style="left:-3.87px;top:10.87px;font-size:12.5px;line-height:16px;color:#333a40;letter-spacing:0.168px;">Item Name</div>
<div class="a " style="left:-114.54px;top:51.76px;font-size:12.8px;line-height:16px;color:#3b4452;font-weight:bold;letter-spacing:-0.151px;">Smart Energy Meter, Class 1.0 Accuracy With Communication Module Without Box</div>
<div class="a " style="left:-51.37px;top:92.66px;font-size:12.8px;line-height:16px;color:#3b4452;font-weight:bold;letter-spacing:-0.132px;">Single Phase Whole Current Smart Energy Meter</div>
</div>
<div class="a " style="left:693.67px;top:811.76px;font-size:12.8px;line-height:16px;color:#3b4452;font-weight:bold;">No</div>
<div class="a " style="left:825.19px;top:811.76px;font-size:12.8px;line-height:16px;color:#3b4452;font-weight:bold;">1</div>
<div class="a " style="left:946.72px;top:811.76px;font-size:12.8px;line-height:16px;color:#3b4452;font-weight:bold;">7203.39</div>
<div class="a " style="left:1128.14px;top:811.76px;font-size:12.8px;line-height:16px;color:#3b4452;font-weight:bold;">0</div>
<div class="a " style="left:1257.37px;top:811.76px;font-size:12.8px;line-height:16px;color:#3b4452;font-weight:bold;">7203.39</div>
<div class="a " style="left:1410.44px;top:811.76px;font-size:12.8px;line-height:16px;color:#3b4452;font-weight:bold;">0</div>
<div class="a " style="left:1546.63px;top:811.76px;font-size:12.8px;line-height:16px;color:#3b4452;font-weight:bold;">18</div>
<div class="a " style="left:1664.59px;top:811.76px;font-size:12.8px;line-height:16px;color:#3b4452;font-weight:bold;">1296.61</div>
<div class="a " style="left:1800.31px;top:811.76px;font-size:12.8px;line-height:16px;color:#3b4452;font-weight:bold;">8500</div>
<div class="a " style="left:693.67px;top:852.66px;font-size:12.8px;line-height:16px;color:#3b4452;font-weight:bold;">No</div>
<div class="a " style="left:825.19px;top:852.66px;font-size:12.8px;line-height:16px;color:#3b4452;font-weight:bold;">1</div>
<div class="a " style="left:950.27px;top:852.66px;font-size:12.8px;line-height:16px;color:#3b4452;font-weight:bold;">322.03</div>
<div class="a " style="left:1128.14px;top:852.66px;font-size:12.8px;line-height:16px;color:#3b4452;font-weight:bold;">0</div>
<div class="a " style="left:1260.92px;top:852.66px;font-size:12.8px;line-height:16px;color:#3b4452;font-weight:bold;">322.03</div>
<div class="a " style="left:1410.44px;top:852.66px;font-size:12.8px;line-height:16px;color:#3b4452;font-weight:bold;">0</div>
<div class="a " style="left:1546.63px;top:852.66px;font-size:12.8px;line-height:16px;color:#3b4452;font-weight:bold;">18</div>
<div class="a " style="left:1671.71px;top:852.66px;font-size:12.8px;line-height:16px;color:#3b4452;font-weight:bold;">57.97</div>
<div class="a " style="left:1803.87px;top:852.66px;font-size:12.8px;line-height:16px;color:#3b4452;font-weight:bold;">380</div>
<div class="a" style="left:1135.5px;top:886px;width:74px;height:30.5px;background:#f7f8fa;border:1px solid #e2e4e8;border-radius:4px 0 0 4px;"></div>
<div class="a" style="left:1238.5px;top:886px;width:51px;height:30.5px;background:#f7f8fa;border:1px solid #e2e4e8;border-radius:0 4px 4px 0;"></div>
<div class="a" style="left:1209px;top:886px;width:30px;height:30.5px;background:#0a8fd9;border-radius:4px;"></div>
<div class="a" style="left:1147px;top:892px;width:53.8px;height:18.8px;background:#3366cc;"></div>
<div class="a" style="left:1250px;top:892px;width:28px;height:18.8px;background:#3366cc;"></div>
<div class="a" style="left:1220px;top:892px;width:11px;height:18.8px;background:#0050cc;"></div>
<div class="a " style="left:1147.40px;top:894.70px;font-size:13px;line-height:16px;color:#ffffff;font-weight:bold;letter-spacing:-0.559px;">Previous</div>
<div class="a " style="left:1220.18px;top:894.70px;font-size:13px;line-height:16px;color:#ffffff;font-weight:bold;">1</div>
<div class="a " style="left:1250.50px;top:894.70px;font-size:13px;line-height:16px;color:#ffffff;font-weight:bold;letter-spacing:-0.260px;">Next</div>
<div class="a" style="left:684px;top:920px;width:1191px;height:4.7px;background:#d4d5d7;border-radius:2.5px;"></div>
<div class="a" style="left:841.5px;top:925px;width:2px;height:2px;background:#1f1fff;border-radius:50%;"></div>
<div class="a" style="left:228px;top:982.4px;width:1673px;height:53.6px;background:#e9e9e9;"></div>
<div class="a " style="left:936.90px;top:1000.89px;font-size:11px;line-height:14px;color:#1a1a1a;font-weight:bold;letter-spacing:-0.152px;">2026 © Idea Infinity IT Solutions (P)Ltd.(TRM V 3.4)</div>
<div class="a" style="left:228px;top:74px;width:1673px;height:77px;background:#ffffff;box-shadow:0 1px 3px rgba(0,0,0,0.04);"></div>
<div class="a" style="left:229px;top:74px;width:2px;height:77px;background:#f1f2f6;"></div>
<div class="a" style="left:231px;top:73px;width:1670px;height:1px;background:#ebebeb;"></div>
<div class="a" style="left:1901px;top:74px;width:15px;height:962px;background:#fafafa;border-radius:0 8px 8px 0;"></div>
<svg style="left:1904px;top:84px" width="9" height="5" viewBox="0 0 9 5"><path d="M0 5L4.5 0L9 5Z" fill="#888"/></svg>
<svg style="left:1904px;top:1021px" width="9" height="5" viewBox="0 0 9 5"><path d="M0 0L4.5 5L9 0Z" fill="#888"/></svg>
<div class="a" style="left:1904px;top:277px;width:9px;height:736px;background:#8a8a8a;border-radius:4.5px;"></div>
<svg style="left:987px;top:80px" width="38" height="52" viewBox="0 0 38 52">
<g fill="none" stroke="#0a95dc" stroke-width="1.3">
<path d="M1.5 6.5Q1 3 3.5 3Q6 3 5.5 6.5M3.5 3V1.2M7 6.5Q6.5 3.5 8.5 3.5Q10.5 3.5 10 6.5"/>
<path d="M12 6.5Q11.5 2.5 14.5 3Q17 3.5 16.5 6.5M13 4.5H16"/>
<path d="M19 6.5Q18.5 2.5 21.5 3Q24 3.5 23.5 6.5M21.5 3V1M20 1H23"/>
<circle cx="28.5" cy="5" r="1.6"/>
</g>
<path d="M1 8H21C29.5 8 34.4 11.5 34.4 16.5C34.4 20.5 32.5 23 29.7 24.2C34 25.5 36 29.5 36 34C36 40.5 31.5 44.7 24 44.7H1Z" fill="#0596dd"/>
<circle cx="15.8" cy="26.4" r="12.6" fill="#ffffff"/>
<path d="M14.3 14.8V38.8" stroke="#0596dd" stroke-width="1.7"/>
<path d="M4.5 32L24 17" stroke="#0596dd" stroke-width="1.1"/>
<circle cx="7.5" cy="29" r="1.4" fill="#0596dd"/><circle cx="12.5" cy="25" r="1.4" fill="#0596dd"/><circle cx="18" cy="21" r="1.4" fill="#0596dd"/><circle cx="23" cy="17.5" r="1.4" fill="#0596dd"/>
<path d="M4 22.5H27M4 27.5H28" stroke="#c6e6f6" stroke-width="0.9"/>
<text x="0.8" y="50.8" font-size="6.2" font-weight="bold" fill="#0a95dc" font-family="Liberation Sans" letter-spacing="0.1" textLength="30" lengthAdjust="spacingAndGlyphs">BESCOM</text>
</svg>
<div class="a " style="left:1029.50px;top:92.06px;font-size:15.4px;line-height:19px;color:#3b4049;font-weight:bold;letter-spacing:-0.037px;">Bangalore Electricity Supply Company Limited (BESCOM)</div>
<div class="a " style="left:1519.20px;top:102.22px;font-size:18.7px;line-height:23px;color:#545a6e;letter-spacing:-1.173px;">USER DETAILS</div>
<div class="a" style="left:1646px;top:104px;width:19px;height:19px;background:#545a6e;border-radius:50%;"></div>
<svg style="left:1650.5px;top:109.5px" width="10" height="8" viewBox="0 0 10 8"><path d="M1.2 1.8L5 5.6L8.8 1.8" fill="none" stroke="#fff" stroke-width="2.4"/></svg>
<div class="a" style="left:1689px;top:74px;width:48px;height:44px;overflow:hidden"><div class="a" style="left:0;top:-5px;width:48px;height:48px;background:#fef7f9;border-radius:50%"></div></div>
<svg style="left:1692px;top:100px" width="24" height="25" viewBox="0 0 24 25"><path d="M4.5 19.5V11A7.5 7.5 0 0 1 19.5 11V19.5L22 21.5H2Z" fill="none" stroke="#545a6e" stroke-width="1.6" stroke-linejoin="round"/><path d="M10 23.3Q12 25 14 23.3" fill="none" stroke="#545a6e" stroke-width="1.6"/></svg>
<div class="a" style="left:1700px;top:81.5px;width:25.5px;height:25px;background:#ef4d50;border-radius:50%;"></div>
<div class="a " style="left:1703.30px;top:87.82px;font-size:11.5px;line-height:14px;color:#ffffff;font-weight:bold;letter-spacing:-0.094px;">898</div>
<div class="a" style="left:1744px;top:92.3px;width:40px;height:40px;background:#fff;border:1px solid #eceef1;border-radius:50%;"></div>
<svg style="left:1750.5px;top:98.8px" width="27" height="27" viewBox="0 0 27 27"><circle cx="13.5" cy="13.5" r="13.5" fill="#000"/><circle cx="13.5" cy="10.3" r="4.3" fill="#fff"/><path d="M5.3 21.5A9.5 6.5 0 0 1 21.7 21.5A10.5 10.5 0 0 1 5.3 21.5Z" fill="#fff"/></svg>
<div class="a " style="left:1793.40px;top:96.28px;font-size:14.5px;line-height:18px;color:#3e4550;font-weight:bold;letter-spacing:-0.633px;">B MUJEEB</div>
<div class="a " style="left:1793.40px;top:118.28px;font-size:11.6px;line-height:14px;color:#6b7189;letter-spacing:-0.467px;">VEERASANDRA</div>

<div class="a" style="left:0px;top:1040px;width:1920px;height:40px;background:#1c2b30;"></div>
<svg style="left:16px;top:1052px" width="16" height="16" viewBox="0 0 16 16"><path d="M0 2.2L6.6 1.3V7.4H0ZM7.4 1.2L16 0V7.4H7.4ZM0 8.2H6.6V14.6L0 13.7ZM7.4 8.2H16V16L7.4 14.8Z" fill="#fff"/></svg>
<div class="a" style="left:48px;top:1040px;width:288px;height:40px;background:#f1f1f1;border-top:1px solid #c8c8c8;"></div>
<svg style="left:60px;top:1052px" width="16" height="16" viewBox="0 0 16 16"><circle cx="10.2" cy="5.8" r="5" fill="none" stroke="#1a1a1a" stroke-width="1.2"/><path d="M6.6 9.4L0.8 15.2" stroke="#1a1a1a" stroke-width="1.3"/></svg>
<div class="a " style="left:88.75px;top:1051.35px;font-size:15px;line-height:19px;color:#333333;letter-spacing:-0.324px;">Type here to search</div>
<svg style="left:260px;top:1041px" width="76" height="39" viewBox="0 0 76 39"><defs><linearGradient id="ns" x1="0" y1="0" x2="0" y2="1"><stop offset="0" stop-color="#16306a"/><stop offset=".45" stop-color="#3f6fae"/><stop offset=".75" stop-color="#b9889e"/><stop offset="1" stop-color="#e0a08a"/></linearGradient><linearGradient id="ns2" x1="0" y1="0" x2="0" y2="1"><stop offset="0" stop-color="#1e2258"/><stop offset="1" stop-color="#3a3c8c"/></linearGradient></defs><path d="M9 4Q16 -1 24 2Q31 -1 38 2Q46 -1 53 3Q62 0 67 5Q71 8 69 13Q73 17 71 23Q74 27 72 32L75 39H1L3 32Q-1 27 2 22Q0 16 4 13Q2 7 9 4Z" fill="url(#ns)"/><path d="M1 39L5 33Q10 27 16 29Q22 25 28 29Q34 26 38 30Q44 27 48 28Q54 25 60 29Q66 27 71 32L75 39Z" fill="url(#ns2)"/><g fill="#f4f0d8"><circle cx="11" cy="12" r="0.9"/><circle cx="17" cy="10" r="0.8"/><circle cx="23" cy="6.5" r="0.8"/><circle cx="29" cy="8.5" r="1"/><circle cx="42" cy="17" r="1.5"/><circle cx="54" cy="13" r="1.5"/><circle cx="47" cy="9" r="0.8"/><circle cx="62" cy="18" r="0.8"/><circle cx="21" cy="19" r="0.9"/><circle cx="30" cy="22" r="0.8"/><circle cx="36" cy="14" r="0.7"/><circle cx="50" cy="27" r="0.8"/><circle cx="8" cy="21" r="0.7"/></g></svg>
<svg style="left:352px;top:1052px" width="16" height="15" viewBox="0 0 16 15"><path d="M0.6 2.5V0.6H10.4V2.5M0.6 12.5V14.4H10.4V12.5" fill="none" stroke="#fff" stroke-width="1.1"/><rect x="0.6" y="4.3" width="9.8" height="6.4" fill="none" stroke="#fff" stroke-width="1.1"/><path d="M14.4 0V15" stroke="#fff" stroke-width="1.1"/><rect x="12.8" y="3.3" width="3.2" height="3.2" fill="#fff"/></svg>
<svg style="left:400px;top:1049.5px" width="23" height="21" viewBox="0 0 23 21"><defs><linearGradient id="tc1" x1="0.3" y1="0" x2="0.2" y2="1"><stop offset="0" stop-color="#17a2f2"/><stop offset=".5" stop-color="#3db86a"/><stop offset="1" stop-color="#f0cc10"/></linearGradient><linearGradient id="tc2" x1="0.8" y1="0" x2="0.4" y2="1"><stop offset="0" stop-color="#a24ff0"/><stop offset=".5" stop-color="#ec4f90"/><stop offset="1" stop-color="#fb9a48"/></linearGradient></defs><path d="M6 0.5H14.5Q16.5 0.5 17.2 2.5L18 5.5H13Q11.5 5.5 11 7L8.8 13.5Q8 15.5 6 15.5H3Q0 15.5 0.6 12.5L2.5 5Q3.5 0.5 6 0.5Z" fill="url(#tc1)"/><path d="M12.3 0.5H14.5Q16.5 0.5 17.2 2.5L18 5.5H11.5Z" fill="#0d4fd8"/><path d="M17 20.5H8.5Q6.5 20.5 5.8 18.5L5 15.5H10Q11.5 15.5 12 14L14.2 7.5Q15 5.5 17 5.5H20Q23 5.5 22.4 8.5L20.5 16Q19.5 20.5 17 20.5Z" fill="url(#tc2)"/><path d="M5 15.5H11.5L10 20.5H8.5Q6.5 20.5 5.8 18.5Z" fill="#ec5230"/></svg>
<svg style="left:449px;top:1051px" width="22" height="19" viewBox="0 0 22 19"><path d="M0 2A1.5 1.5 0 0 1 1.5 0.5H8L10 2.5H20.5A1.5 1.5 0 0 1 22 4V17.5A1.5 1.5 0 0 1 20.5 19H1.5A1.5 1.5 0 0 1 0 17.5Z" fill="#f4c53b"/><path d="M0 5H22V17.5A1.5 1.5 0 0 1 20.5 19H1.5A1.5 1.5 0 0 1 0 17.5Z" fill="#fbd660"/><rect x="7" y="13" width="8" height="6" fill="#2a7fd4"/></svg>
<svg style="left:497px;top:1049px" width="23" height="23" viewBox="0 0 23 23"><path d="M7 5V3.5A4.5 3.5 0 0 1 16 3.5V5" fill="none" stroke="#37b6e8" stroke-width="1.6"/><rect x="0.5" y="5" width="22" height="17.5" rx="2.5" fill="#f4f4f4"/><rect x="7" y="9" width="4" height="4" fill="#f25022"/><rect x="12" y="9" width="4" height="4" fill="#7fba00"/><rect x="7" y="14" width="4" height="4" fill="#00a4ef"/><rect x="12" y="14" width="4" height="4" fill="#ffb900"/></svg>
<svg style="left:546px;top:1049px" width="24" height="23" viewBox="0 0 24 23"><path d="M6 4L16 1L24 6V19A3 3 0 0 1 21 22H9A3 3 0 0 1 6 19Z" fill="#1d8ae0"/><path d="M6 9L24 6V19A3 3 0 0 1 21 22H9A3 3 0 0 1 6 19Z" fill="#49b4f2"/><rect x="0" y="9" width="11" height="11" rx="2" fill="#0f5fb8"/><circle cx="5.5" cy="14.5" r="3" fill="none" stroke="#fff" stroke-width="1.6"/></svg>
<svg style="left:595px;top:1049px" width="23" height="23" viewBox="0 0 23 23"><rect x="4" y="1" width="19" height="21" rx="1.5" fill="#e9eef7"/><path d="M12 6H21M12 9H21M12 12H21M12 15H21M12 18H21" stroke="#2b5fb4" stroke-width="1.2"/><rect x="0" y="4" width="12" height="15" rx="1" fill="#2b5aab"/><text x="1.3" y="15.5" font-size="10" font-weight="bold" fill="#fff" font-family="Liberation Sans">W</text></svg>
<svg style="left:645px;top:1048px" width="20" height="24" viewBox="0 0 20 24"><path d="M10 1Q4 1 2 8Q1 13 4 14L17 14Q19 9 16 5Q14 1 10 1Z" fill="#f6e21b"/><path d="M2 13Q0 20 6 23Q12 24 16 20Q19 18 20 15L17 13Z" fill="#e52222"/><circle cx="10" cy="7" r="2.2" fill="none" stroke="#222" stroke-width="1"/><circle cx="9" cy="17" r="2.2" fill="none" stroke="#222" stroke-width="1"/></svg>
<svg style="left:693px;top:1049px" width="24" height="23" viewBox="0 0 24 23"><rect x="4" y="1" width="20" height="21" rx="1.5" fill="#e7f1ea"/><path d="M13 5V19M18 5V19M11 8H23M11 12H23M11 16H23" stroke="#1f7a45" stroke-width="1"/><rect x="0" y="3.5" width="12" height="16" rx="1" fill="#1d6f42"/><text x="2.3" y="15.8" font-size="10.5" font-weight="bold" fill="#fff" font-family="Liberation Sans">X</text></svg>
<svg style="left:742px;top:1048px" width="24" height="24" viewBox="0 0 24 24"><circle cx="12" cy="13" r="8" fill="none" stroke="#27a3e6" stroke-width="4"/><path d="M4 13H20" stroke="#27a3e6" stroke-width="3.5"/><path d="M12 15H20" stroke="#1c2b30" stroke-width="2.2"/><path d="M2 21Q0 14 12 5Q23 -2 22 4" fill="none" stroke="#f4c01e" stroke-width="1.6"/></svg>
<svg style="left:791px;top:1048px" width="24" height="24" viewBox="0 0 24 24"><defs><linearGradient id="op" x1="0" y1="0" x2="0.4" y2="1"><stop offset="0" stop-color="#ff1b2d"/><stop offset="1" stop-color="#b70d1c"/></linearGradient></defs><ellipse cx="12" cy="12" rx="11" ry="11.5" fill="url(#op)"/><ellipse cx="12" cy="12" rx="4.6" ry="8.6" fill="#1c2b30"/></svg>
<div class="a" style="left:828px;top:1040px;width:48px;height:40px;background:#465256;"></div>
<div class="a" style="left:828px;top:1078px;width:48px;height:2px;background:#a6e9f7;"></div>
<svg style="left:840px;top:1048px" width="25" height="25" viewBox="0 0 25 25"><defs><linearGradient id="eg" x1="0" y1="0" x2="1" y2="0.6"><stop offset="0" stop-color="#2ab0ef"/><stop offset=".55" stop-color="#36c5d8"/><stop offset="1" stop-color="#6ae36a"/></linearGradient><linearGradient id="eg2" x1="0" y1="0" x2="0.3" y2="1"><stop offset="0" stop-color="#1f8ee0"/><stop offset="1" stop-color="#0b4ea3"/></linearGradient></defs><circle cx="12.5" cy="12.5" r="12" fill="url(#eg)"/><path d="M1 11Q2.5 6.5 8 6.5Q14 6.5 15 12Q12 8.5 9 10Q6 12 7.5 17Q9.5 22 15 22Q19.5 22 21.5 19Q19 24.5 12.5 24.5Q4 24.5 1 16Z" fill="url(#eg2)"/><path d="M10.5 13.5Q11 11 13.5 11.3Q16.5 11.8 16.8 14.5Q14 13 10.5 13.5Z" fill="#465256"/></svg>
<div class="a" style="left:881px;top:1078px;width:40px;height:2px;background:#a6e9f7;"></div>
<svg style="left:889px;top:1048px" width="26" height="26" viewBox="0 0 26 26"><circle cx="12" cy="12" r="11.5" fill="#dd3b30"/><path d="M12 12L2 18A11.5 11.5 0 0 0 17 23Z" fill="#1e9a4b"/><path d="M12 12L23.5 10A11.5 11.5 0 0 1 17 23Z" fill="#f8c21a"/><circle cx="12" cy="12" r="5" fill="#fff"/><circle cx="12" cy="12" r="3.8" fill="#1b73e8"/><circle cx="18.5" cy="18.5" r="7" fill="#3f93dd"/><path d="M12.5 24Q14 19.5 18.5 19.5Q23 19.5 24.5 24Q21.5 26 18.5 26Q15 26 12.5 24Z" fill="#efe6ea"/><ellipse cx="18.5" cy="16.5" rx="2.6" ry="3.2" fill="#9a6a7a"/><path d="M15.8 15Q16 12 18.5 12Q21 12 21.2 15Q19 13.8 15.8 15Z" fill="#141a2e"/></svg>
<svg style="left:1540px;top:1050px" width="20" height="20" viewBox="0 0 20 20"><defs><linearGradient id="sun" x1="0" y1="0" x2="0" y2="1"><stop offset="0" stop-color="#ffc21a"/><stop offset="1" stop-color="#f07a0a"/></linearGradient></defs><circle cx="10" cy="10" r="10" fill="url(#sun)"/></svg>
<div class="a " style="left:1570.00px;top:1051.38px;font-size:14.2px;line-height:18px;color:#ffffff;letter-spacing:-0.438px;white-space:pre;">29°C  Sunny</div>
<svg style="left:1671px;top:1055px" width="13" height="8" viewBox="0 0 13 8"><path d="M0.7 7.3L6.5 1L12.3 7.3" fill="none" stroke="#fff" stroke-width="1.2"/></svg>
<svg style="left:1695px;top:1052px" width="13" height="16" viewBox="0 0 13 16"><rect x="0.6" y="4" width="8" height="8" rx="1.5" fill="none" stroke="#fff" stroke-width="1.1"/><path d="M9 6.5L12.4 4.5V11.5L9 9.5" fill="none" stroke="#fff" stroke-width="1.1"/><path d="M2.5 1H7.5M2.5 15H7.5" stroke="#fff" stroke-width="1"/></svg>
<svg style="left:1717px;top:1053px" width="17" height="15" viewBox="0 0 17 15"><rect x="3" y="0.6" width="13.4" height="9.5" fill="none" stroke="#fff" stroke-width="1.1"/><path d="M9.7 10V13.5M6 14.4H13.5" stroke="#fff" stroke-width="1.1"/><rect x="0.5" y="2" width="5" height="5" fill="#1c2b30" stroke="#fff" stroke-width="1"/></svg>
<svg style="left:1741px;top:1053px" width="17" height="15" viewBox="0 0 17 15"><path d="M0.6 5H4L8 1.2V13.8L4 10H0.6Z" fill="none" stroke="#fff" stroke-width="1.1"/><path d="M10.5 4.5Q12 7.5 10.5 10.5M13 2.5Q15.5 7.5 13 12.5" fill="none" stroke="#fff" stroke-width="1.1"/><path d="M15.5 1Q18 7.5 15.5 14" fill="none" stroke="#889" stroke-width="1"/></svg>
<div class="a " style="left:1767.50px;top:1053.07px;font-size:11.5px;line-height:14px;color:#ffffff;letter-spacing:-1.460px;">ENG</div>
<div class="a " style="left:1818.75px;top:1043.71px;font-size:11.8px;line-height:15px;color:#ffffff;letter-spacing:-0.820px;">16:48</div>
<div class="a " style="left:1803.00px;top:1061.14px;font-size:12px;line-height:15px;color:#ffffff;letter-spacing:-0.348px;">25-02-2026</div>
<svg style="left:1879px;top:1052px" width="17" height="15" viewBox="0 0 17 15"><path d="M0.6 0.6H16.4V11H6L2.5 14V11H0.6Z" fill="#fff"/><path d="M3 3.5H14M3 6H14M3 8.5H10" stroke="#1c2b30" stroke-width="1"/></svg>
<div class="a" style="left:1887.5px;top:1060px;width:15px;height:14.5px;background:#2a3438;border:1.3px solid #8a8f91;border-radius:50%;"></div>
<div class="a " style="left:1892.08px;top:1061.16px;font-size:10.5px;line-height:13px;color:#ffffff;font-weight:bold;">6</div>
<div class="a" style="left:1915px;top:1040px;width:1px;height:40px;background:#6a7478;"></div>

</body></html>
